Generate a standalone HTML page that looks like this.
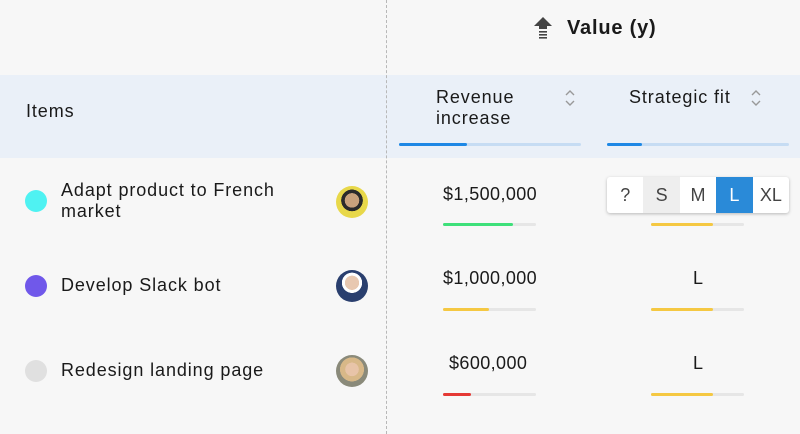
<!DOCTYPE html>
<html><head><style>
*{margin:0;padding:0;box-sizing:border-box}
body{width:800px;height:434px;background:#f7f7f7;font-family:"Liberation Sans",sans-serif;color:#1a1a1a;position:relative;overflow:hidden}
.a{position:absolute}
.t{font-size:18px;letter-spacing:0.9px;white-space:nowrap}
.n{letter-spacing:0.4px}
.bar{position:absolute;height:3px;background:#e6e6e6;border-radius:2px}
.bar i{display:block;height:3px;border-radius:2px}
.dot{position:absolute;width:22px;height:22px;border-radius:50%}
.av{position:absolute;width:32px;height:32px;border-radius:50%}
.seg{position:absolute;left:607px;top:177px;width:182px;height:36px;background:#fff;box-shadow:0 1px 3px rgba(0,0,0,.25);border-radius:3px;display:flex;overflow:hidden}
.seg div{flex:1;display:flex;align-items:center;justify-content:center;font-size:18px;color:#444}
</style></head><body>
<div class="a" style="left:0;top:75px;width:800px;height:83px;background:#eaf0f8"></div>
<div class="a" style="left:386px;top:0;height:434px;border-left:1px dashed #b8b8b8"></div>
<svg class="a" style="left:533px;top:16px" width="20" height="24" viewBox="0 0 20 24"><path d="M10 1 L19 10 H14 V13 H6 V10 H1 Z" fill="#444"/><rect x="6" y="15" width="8" height="1.6" fill="#444"/><rect x="6" y="18" width="8" height="1.6" fill="#444"/><rect x="6" y="21" width="8" height="1.6" fill="#444"/></svg>
<div class="a" style="left:567px;top:17px;font-size:20px;letter-spacing:0.8px;font-weight:bold">Value (y)</div>
<div class="a t" style="left:26px;top:101px">Items</div>
<div class="a t" style="left:436px;top:87px;line-height:21px">Revenue<br>increase</div>
<div class="a t" style="left:629px;top:87px">Strategic fit</div>
<svg class="a" style="left:564px;top:89px" width="12" height="18"><path d="M2 6 L6 2 L10 6 M2 12 L6 16 L10 12" fill="none" stroke="#999" stroke-width="1.4"/></svg>
<svg class="a" style="left:750px;top:89px" width="12" height="18"><path d="M2 6 L6 2 L10 6 M2 12 L6 16 L10 12" fill="none" stroke="#999" stroke-width="1.4"/></svg>
<div class="bar" style="left:399px;top:143px;width:182px;background:#c6dcf3"><i style="width:68px;background:#1e88e5"></i></div>
<div class="bar" style="left:607px;top:143px;width:182px;background:#c6dcf3"><i style="width:35px;background:#1e88e5"></i></div>

<div class="dot" style="left:25px;top:190px;background:#4ff2f2"></div>
<div class="a t" style="left:61px;top:180px;line-height:21px">Adapt product to French<br>market</div>
<div class="av" style="left:336px;top:186px;background:radial-gradient(circle at 50% 45%,#c9a27c 0 30%,#2b2b2b 31% 45%,#e8d84a 46%)"></div>
<div class="a t n" style="left:443px;top:184px">$1,500,000</div>
<div class="bar" style="left:443px;top:223px;width:93px"><i style="width:70px;background:#3ee07a"></i></div>
<div class="seg"><div>?</div><div style="background:#eee">S</div><div>M</div><div style="background:#2a8ad8;color:#fff">L</div><div>XL</div></div>
<div class="bar" style="left:651px;top:223px;width:93px"><i style="width:62px;background:#f5c842"></i></div>

<div class="dot" style="left:25px;top:275px;background:#7058ea"></div>
<div class="a t" style="left:61px;top:275px">Develop Slack bot</div>
<div class="av" style="left:336px;top:270px;background:radial-gradient(circle at 50% 40%,#e8c8b0 0 28%,#fff 29% 40%,#2a3f6e 41%)"></div>
<div class="a t n" style="left:443px;top:268px">$1,000,000</div>
<div class="bar" style="left:443px;top:308px;width:93px"><i style="width:46px;background:#f5c842"></i></div>
<div class="a t" style="left:693px;top:268px">L</div>
<div class="bar" style="left:651px;top:308px;width:93px"><i style="width:62px;background:#f5c842"></i></div>

<div class="dot" style="left:25px;top:360px;background:#e0e0e0"></div>
<div class="a t" style="left:61px;top:360px">Redesign landing page</div>
<div class="av" style="left:336px;top:355px;background:radial-gradient(circle at 50% 45%,#e8c4a8 0 28%,#d8b888 29% 50%,#8a8a7a 51%)"></div>
<div class="a t n" style="left:449px;top:353px">$600,000</div>
<div class="bar" style="left:443px;top:393px;width:93px"><i style="width:28px;background:#e53935"></i></div>
<div class="a t" style="left:693px;top:353px">L</div>
<div class="bar" style="left:651px;top:393px;width:93px"><i style="width:62px;background:#f5c842"></i></div>
</body></html>
